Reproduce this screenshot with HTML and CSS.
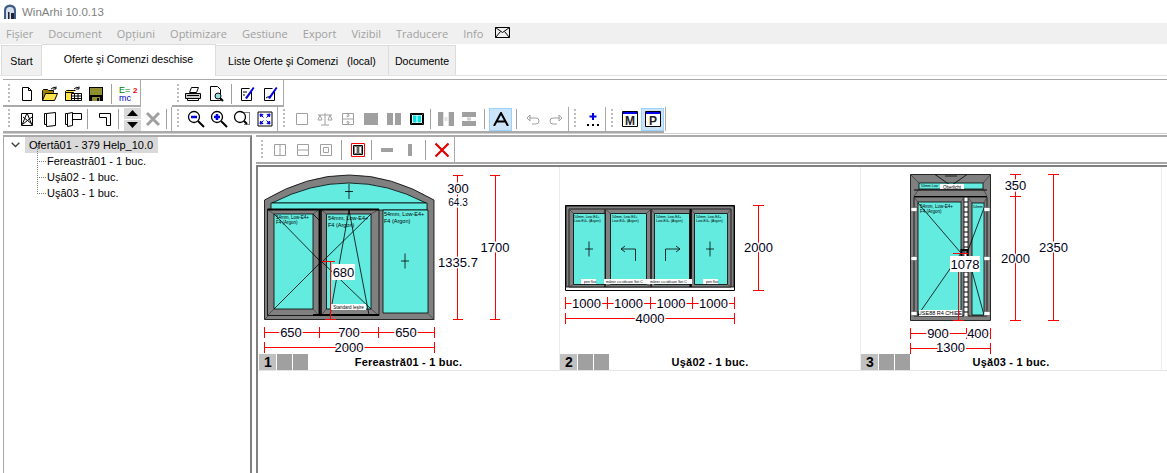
FILE: index.html
```html
<!DOCTYPE html>
<html lang="ro">
<head>
<meta charset="utf-8">
<title>WinArhi 10.0.13</title>
<link rel="stylesheet" href="styles.css">
</head>
<body>
<div class="app">
  <header class="titlebar">
    <svg class="appicon" width="14" height="16" viewBox="0 0 14 16"><path d="M1 15V6a6 5.500 0 0 1 12 0v9z" fill="#3f5f88"/><path d="M3 15V7a4 4 0 0 1 8 0v8z" fill="#d5dee8"/><path d="M5 15V8h1.500v7zM8 9h3v6H8z" fill="#223"/></svg>
    <span class="apptitle">WinArhi 10.0.13</span>
  </header>
  <nav class="menubar">
    <span class="mi m1">Fişier</span><span class="mi">Document</span><span class="mi">Opţiuni</span><span class="mi">Optimizare</span><span class="mi">Gestiune</span><span class="mi">Export</span><span class="mi">Vizibil</span><span class="mi">Traducere</span><span class="mi">Info</span>
    <svg class="mail" width="15" height="11" viewBox="0 0 15 11"><path d="M.5.500h14v10H.5zM.5.500l7 5 7-5M.5 10.500l5-6M14.500 10.500l-5-6" fill="none" stroke="#000"/></svg>
  </nav>
  <div class="tabs">
    <div class="tab t-start">Start</div>
    <div class="tab t-active">Oferte şi Comenzi deschise</div>
    <div class="tab t-list">Liste Oferte şi Comenzi &nbsp; (local)</div>
    <div class="tab t-docs">Documente</div>
  </div>

  <div class="toolbars">
    <div class="tb-row r1">
      <div class="group g-file">
        <i class="grip"></i>
        <span class="btn"><svg width="16" height="16" viewBox="0 0 16 16"><path d="M3.500 1.500h6l3 3v10h-9zM9.500 1.500v3h3" fill="#fff" stroke="#000"/></svg></span>
        <span class="btn"><svg width="18" height="16" viewBox="0 0 18 16"><path d="M1.500 14.500v-10l1-1h4l1 1h5v2" fill="#a08000" stroke="#000"/><path d="M1.500 14.500l3-7h12l-3 7z" fill="#ffe34d" stroke="#000"/><path d="M10 3q3-3 5-1M15 .5v2.500h-3" fill="none" stroke="#000"/></svg></span>
        <span class="btn"><svg width="18" height="16" viewBox="0 0 18 16"><path d="M1.500 14.500v-9l1-1h9" fill="#ffe34d" stroke="#000"/><path d="M1.500 6.500h8v8h-8z" fill="#ffe34d" stroke="#000"/><path d="M7.500 7.500h10v7h-10zM7.500 10h10M7.500 12.500h10M10.500 7.500v7M14 7.500v7" fill="#fff" stroke="#000"/><path d="M10 3q3-3 5-1M15 .5v2.500h-3" fill="none" stroke="#000"/></svg></span>
        <span class="btn"><svg width="16" height="16" viewBox="0 0 16 16"><path d="M1 1h14v14H1z" fill="#000"/><path d="M2 2h12v7H2z" fill="#8f8f2f"/><path d="M4 11h8v4H4z" fill="#8f8f2f"/><path d="M9 12h2v3H9z" fill="#000"/></svg></span>
        <i class="sep"></i>
        <span class="btn"><svg width="20" height="18" viewBox="0 0 20 18"><text x="1" y="8" class="ic-t green">E=</text><text x="1" y="16" class="ic-t blue">mc</text><text x="15" y="8" class="ic-t red">2</text></svg></span>
      </div>
      <div class="group g-print">
        <i class="grip"></i>
        <span class="btn"><svg width="18" height="16" viewBox="0 0 18 16"><path d="M5.500 6.500l2-5h7l-2 5z" fill="#fff" stroke="#000"/><path d="M1.500 7.500h15v5h-15z" fill="#c8c8c8" stroke="#000"/><path d="M3.500 12.500h11v2h-11zM3 9.500h12" fill="#fff" stroke="#000"/></svg></span>
        <span class="btn"><svg width="16" height="16" viewBox="0 0 16 16"><path d="M2.500.5h7l3 3v11h-10z" fill="#fff" stroke="#000"/><circle cx="10" cy="10" r="3" fill="#8ee0e0" stroke="#000"/><path d="M12 12l3 3" stroke="#000" stroke-width="2"/></svg></span>
        <i class="sep"></i>
        <span class="btn"><svg width="16" height="16" viewBox="0 0 16 16"><path d="M11.500 6v8.500h-10v-12h8M3 6h4M3 9h2" fill="#fff" stroke="#000"/><path d="M5 12L13 1l1.500 1L7 13z" fill="#0000e0"/></svg></span>
        <span class="btn"><svg width="16" height="16" viewBox="0 0 16 16"><path d="M11.500 6v8.500h-10v-12h8M3 12q2-2 4-1" fill="#fff" stroke="#000"/><path d="M5 12L13 1l1.500 1L7 13z" fill="#0000e0"/></svg></span>
      </div>
    </div>
    <div class="tb-row r2">
      <div class="group g-a">
        <i class="grip"></i>
        <span class="btn"><svg width="14" height="16" viewBox="0 0 14 16"><path d="M1.500 2.500h11v12h-11zM2 14L7 2l5 12M3 6l9 7M12 6l-9 7" fill="none" stroke="#000"/></svg></span>
        <span class="btn"><svg width="14" height="16" viewBox="0 0 14 16"><path d="M3.500 2.500l9-1v13l-9 1zM3.500 2.500h-2v11h2" fill="#fff" stroke="#000"/></svg></span>
        <span class="btn"><svg width="18" height="16" viewBox="0 0 18 16"><path d="M3.500 2.500l5-1v13l-5 1zM3.500 2.500h-2v11h2M8.500 2.500h9v6h-9" fill="#fff" stroke="#000"/></svg></span>
        <i class="sep sep-a"></i>
        <span class="btn"><svg width="14" height="14" viewBox="0 0 14 14"><path d="M1.500 1.500h11v12h-4v-8h-7z" fill="#fff" stroke="#000"/></svg></span>
        <i class="sep sep-narrow"></i>
        <span class="updown"><b class="ud"><svg width="11" height="6" viewBox="0 0 11 6"><path d="M5.500 0l5.500 6H0z"/></svg></b><b class="ud"><svg width="11" height="6" viewBox="0 0 11 6"><path d="M0 0h11L5.500 6z"/></svg></b></span>
        <span class="btn"><svg width="16" height="16" viewBox="0 0 16 16"><path d="M2 2l12 12M14 2L2 14" stroke="#a0a0a0" stroke-width="3"/></svg></span>
        <i class="sep sep-narrow"></i>
      </div>
      <div class="group g-b">
        <i class="grip"></i>
        <span class="btn"><svg width="18" height="18" viewBox="0 0 18 18"><circle cx="7" cy="7" r="5.500" fill="#fff" stroke="#000" stroke-width="1.300"/><path d="M4 7h6" stroke="#0000e0" stroke-width="2.500"/><path d="M11 11l6 6" stroke="#000" stroke-width="2"/></svg></span>
        <span class="btn"><svg width="18" height="18" viewBox="0 0 18 18"><circle cx="7" cy="7" r="5.500" fill="#fff" stroke="#000" stroke-width="1.300"/><path d="M4 7h6M7 4v6" stroke="#0000e0" stroke-width="2.500"/><path d="M11 11l6 6" stroke="#000" stroke-width="2"/></svg></span>
        <span class="btn"><svg width="18" height="18" viewBox="0 0 18 18"><circle cx="7" cy="7" r="5.500" fill="#fff" stroke="#000" stroke-width="1.300"/><path d="M11 11l3 3" stroke="#000" stroke-width="2"/><path d="M8.500 2.500h8v12h-6" fill="none" stroke="#000" stroke-dasharray="1 1"/></svg></span>
        <span class="btn"><svg width="16" height="16" viewBox="0 0 16 16"><path d="M1 1h14v14H1z" fill="#fff" stroke="#000"/><path d="M3 3l3 .5L3.500 6zM13 3l-3 .5L12.500 6zM3 13l3-.5L3.500 10zM13 13l-3-.5 2.500-2.500zM4 4l2.500 2.500M12 4L9.500 6.500M4 12l2.500-2.500M12 12L9.500 9.500" fill="#0000e0" stroke="#0000e0"/></svg></span>
      </div>
      <div class="group g-c">
        <i class="grip"></i>
        <span class="btn"><svg width="14" height="14" viewBox="0 0 14 14"><path d="M1.500 1.500h11v11h-11z" fill="none" stroke="#a0a0a0"/></svg></span>
        <span class="btn"><svg width="16" height="14" viewBox="0 0 16 14"><path d="M8 1v12M4 13h8M1 3h14M3 3l-2 5h4zM13 3l-2 5h4z" fill="none" stroke="#a0a0a0"/></svg></span>
        <span class="btn"><svg width="14" height="14" viewBox="0 0 14 14"><path d="M1.500 1.500h11v11h-11zM1.500 7h11M7 2v3l-1.500-1M7 2l1.500 2M7 12V9l-1.500 1M7 12l1.500-2" fill="none" stroke="#a0a0a0"/></svg></span>
        <span class="btn"><svg width="14" height="14" viewBox="0 0 14 14"><path d="M0 1h14v12H0z" fill="#a0a0a0"/></svg></span>
        <span class="btn"><svg width="14" height="14" viewBox="0 0 14 14"><path d="M0 1h6v12H0zM8 1h6v12H8z" fill="#a0a0a0"/></svg></span>
        <span class="btn"><svg width="14" height="14" viewBox="0 0 14 14"><path d="M.5 1.500h13v11H.5z" fill="#fff" stroke="#000"/><path d="M1.500 2.500h11v9h-11z" fill="none" stroke="#000"/><path d="M3 3.500h3.500v7H3zM7.500 3.500H11v7H7.500z" fill="#00e0e0"/></svg></span>
        <i class="sep sep-narrow"></i>
        <span class="btn"><svg width="16" height="14" viewBox="0 0 16 14"><path d="M0 0h5v14H0zM11 0h5v14h-5zM6.500 6h3M6.500 8h3" fill="#a0a0a0" stroke="#a0a0a0" stroke-width=".6"/></svg></span>
        <span class="btn"><svg width="16" height="14" viewBox="0 0 16 14"><path d="M1 0h14v5H1zM1 9h14v5H1z" fill="#a0a0a0"/><path d="M7 5.500v3M9 5.500v3" stroke="#a0a0a0"/></svg></span>
        <i class="sep"></i>
        <span class="btn on"><svg width="16" height="14" viewBox="0 0 16 14"><path d="M1 14L8 1l7 13M3.500 9.500h9" fill="none" stroke="#000" stroke-width="2"/></svg></span>
        <i class="sep"></i>
        <span class="btn"><svg width="14" height="12" viewBox="0 0 14 12"><path d="M3 5h7a3 3 0 0 1 0 6H6M4 2L1 5l3 3z" fill="none" stroke="#a0a0a0"/></svg></span>
        <span class="btn"><svg width="14" height="12" viewBox="0 0 14 12"><path d="M11 5H4a3 3 0 0 0 0 6h4M10 2l3 3-3 3z" fill="none" stroke="#a0a0a0"/></svg></span>
      </div>
      <div class="group g-d">
        <i class="grip"></i>
        <span class="btn"><svg width="14" height="14" viewBox="0 0 14 14"><path d="M7 1v7M3.500 4.500h7" stroke="#0000e0" stroke-width="2"/><path d="M1 12h2v2H1zM6 12h2v2H6zM11 12h2v2h-2z"/></svg></span>
      </div>
      <div class="group g-e">
        <i class="grip"></i>
        <span class="btn"><svg width="16" height="16" viewBox="0 0 16 16"><path d="M.5.500h15v15H.5z" fill="#fff" stroke="#000"/><path d="M1 1h14v2H1z" fill="#0000e0"/><text x="8" y="14" class="ic-l">M</text></svg></span>
        <span class="btn on"><svg width="16" height="16" viewBox="0 0 16 16"><path d="M.5.500h15v15H.5z" fill="#fff" stroke="#000"/><path d="M1 1h14v2H1z" fill="#0000e0"/><text x="8" y="14" class="ic-l">P</text></svg></span>
      </div>
    </div>
  </div>

  <main class="workspace">
    <aside class="tree">
      <div class="root">
        <svg class="chev" width="9" height="6" viewBox="0 0 9 6"><path d="M.7.700l3.800 3.800L8.300.700" fill="none" stroke="#404040" stroke-width="1.400"/></svg>
        <span class="root-label">Ofertă01 - 379 Help_10.0</span>
      </div>
      <ul class="children">
        <li>Fereastră01 - 1 buc.</li>
        <li>Uşă02 - 1 buc.</li>
        <li>Uşă03 - 1 buc.</li>
      </ul>
    </aside>
    <section class="view">
      <div class="tb3">
        <div class="group g-f">
          <i class="grip"></i>
          <span class="btn"><svg width="14" height="14" viewBox="0 0 14 14"><path d="M1.500 1.500h11v11h-11zM7 1.500v11" fill="none" stroke="#a0a0a0"/></svg></span>
          <span class="btn"><svg width="14" height="14" viewBox="0 0 14 14"><path d="M1.500 1.500h11v11h-11zM1.500 7h11" fill="none" stroke="#a0a0a0"/></svg></span>
          <span class="btn"><svg width="14" height="14" viewBox="0 0 14 14"><path d="M1.500 1.500h11v11h-11zM4.500 4.500h5v5h-5z" fill="none" stroke="#a0a0a0"/></svg></span>
          <i class="sep"></i>
          <span class="btn"><svg width="14" height="14" viewBox="0 0 14 14"><path d="M.5.500h13v13H.5z" fill="none" stroke="#f00"/><path d="M2.500 2.500h9v9h-9zM7 2.500v9" fill="#fff" stroke="#000"/><path d="M3.500 3.500H6v7H3.500zM8 3.500h2.500v7H8z" fill="#fff" stroke="#000" stroke-width=".5"/></svg></span>
          <i class="sep sep-narrow"></i>
          <span class="btn"><svg width="14" height="4" viewBox="0 0 14 4"><path d="M1 0h12v4H1z" fill="#a0a0a0"/></svg></span>
          <span class="btn"><svg width="4" height="14" viewBox="0 0 4 14"><path d="M0 1h4v12H0z" fill="#a0a0a0"/></svg></span>
          <i class="sep"></i>
          <span class="btn"><svg width="16" height="16" viewBox="0 0 16 16"><path d="M1.500 1.500l13 13M14.500 1.500l-13 13" stroke="#e00000" stroke-width="2.200"/></svg></span>
        </div>
      </div>
      <div class="canvas">
        <figure class="cell">
          <svg class="drawing" width="301" height="187" viewBox="258 167 301 187">
            <path class="fr" d="M264.500 200Q349 150 434 200V319.500H264.500Z"/>
            <path class="gl" d="M272 203Q349 163 426 203Z"/>
            <path class="gl" d="M271 203h156v7H271z"/>
            <path class="fr" d="M267.500 209.500h51.500v106h-51.500zM321 209.500h58v106h-58z"/>
            <path class="gl" d="M274 214h39v95h-39zM326.500 214h44.500v95h-44.500zM383 210h45v103h-45z"/>
            <path class="mt" d="M264.500 319.500l3.500-3.500M434 319.500l-6-6M267.500 209.500l6.500 4.500M319 209.500l-6 4.500M267.500 315.500l6.500-6.500M319 315.500l-6-6.500M321 209.500l5.500 4.500M379 209.500l-8 4.500M321 315.500l5.500-6.500M379 315.500l-8-6.500"/>
            <path class="blk" d="M319.500 209v106M321 209v106"/>
            <path class="blk3" d="M267.500 209.500H379M313 315h66"/>
            <path class="th" d="M345 191.500h8M349 184v15M401 261h8M405 253.500v15M274 214l47 48-47 47M313 214l6 6M371 214l-49 48 49 47M349 210l-19 105M349 210l20 105"/>
            <text x="276" y="219" class="sm">54mm, Low-E4+</text><text x="276" y="224" class="sm">F4 (Argon)</text>
            <text x="328" y="220" class="sm sm2">54mm, Low-E4+</text><text x="328" y="227" class="sm sm2">F4 (Argon)</text>
            <text x="384" y="216" class="sm sm2">54mm, Low-E4+</text><text x="384" y="223" class="sm sm2">F4 (Argon)</text>
            <rect x="331" y="304" width="35" height="6" class="lb"/><text x="348.500" y="309" class="sm mid">Standard Ieşire</text>
            <path class="dim" d="M453 175.500h10M453 319.500h10M457.500 175.500v144M490 175.500h10M490 319.500h10M495.500 175.500v144M264.500 327v11M319.500 327v11M378.500 327v11M434 327v11M264.500 332.500H434M264.500 342v11M434 342v11M264.500 347.500H434M322 261.500h13M330.500 261.500v58M325 319.500h11"/>
            <text x="458" y="193" class="dn halo">300</text><text x="458" y="206" class="dn halo dn-s">64.3</text><text x="458" y="267" class="dn halo">1335.7</text><text x="495" y="252" class="dn halo">1700</text>
            <text x="291" y="337" class="dn halo">650</text><text x="349" y="337" class="dn halo">700</text><text x="406" y="337" class="dn halo">650</text><text x="349" y="352" class="dn halo">2000</text>
            <rect x="332" y="264" width="23" height="16" class="lb"/><text x="343.500" y="277" class="dn">680</text>
          </svg>
          <figcaption class="cap"><span class="chips"><b class="chip num">1</b><b class="chip"></b><b class="chip"></b></span><span class="cap-t">Fereastră01 - 1 buc.</span></figcaption>
        </figure>
        <figure class="cell">
          <svg class="drawing" width="300" height="187" viewBox="560 167 300 187">
            <path class="wh" d="M565.500 205.500h169v85h-169z"/>
            <path class="fr" d="M566 206h168v81H566z"/>
            <path class="fr" d="M569 209h36v78h-36zM605 209h46v78h-46zM651 209h40v78h-40zM691 209h40v78h-40z"/>
            <path class="gl" d="M573.500 213.500h31.500v71h-31.500zM610.500 213.500h36v71h-36zM654.500 213.500h35v71h-35zM694.500 213.500h33v71h-33z"/>
            <path class="mt" d="M569 209l4.500 4.500M605 209l-1 4.500M605 209l5.500 4.500M651 209l-4.500 4.500M651 209l3.500 4.500M691 209l-1.500 4.500M691 209l3.500 4.500M731 209l-3.500 4.500M569 287l4.500-2.500M731 287l-3.500-2.500M605 287l5.500-2.500M651 287l-4.500-2.500"/>
            <path class="blk3" d="M690.500 209v78"/>
            <path class="th" d="M585 249h8M589 241.500v15M706 249h8M710 241.500v15M635.500 261v-12H621M625 246l-4 3 4 3M665.500 261v-12H680M676 246l4 3-4 3"/>
            <g class="tiny"><text x="574" y="218">54mm, Low-E4+</text><text x="574" y="222">Low-E4+ (Argon)</text><text x="612" y="218">54mm, Low-E4+</text><text x="612" y="222">Low-E4+ (Argon)</text><text x="656" y="218">54mm, Low-E4+</text><text x="656" y="222">Low-E4+ (Argon)</text><text x="696" y="218">54mm, Low-E4+</text><text x="696" y="222">Low-E4+ (Argon)</text></g>
            <path class="lb" d="M581 279h15v5h-15zM604 279h45v5h-45zM649 279h43v5h-43zM703 279h15v5h-15z"/>
            <g class="tiny"><text x="584" y="283">pen flux</text><text x="606" y="283">mâner cu ridicare Set C</text><text x="650" y="283">mâner cu ridicare Set C</text><text x="706" y="283">pen flux</text></g>
            <path class="dim" d="M753 205.500h11M753 290.500h11M758.500 205.500v85M565.500 297v12M607.500 297v12M650 297v12M692.500 297v12M734.500 297v12M565.500 303.500h169M565.500 313v11M734.500 313v11M565.500 318.500h169"/>
            <text x="758.500" y="252" class="dn halo">2000</text>
            <text x="586.500" y="308" class="dn halo">1000</text><text x="628.500" y="308" class="dn halo">1000</text><text x="671" y="308" class="dn halo">1000</text><text x="713.500" y="308" class="dn halo">1000</text><text x="650" y="323" class="dn halo">4000</text>
          </svg>
          <figcaption class="cap"><span class="chips"><b class="chip num">2</b><b class="chip"></b><b class="chip"></b></span><span class="cap-t">Uşă02 - 1 buc.</span></figcaption>
        </figure>
        <figure class="cell">
          <svg class="drawing" width="300" height="187" viewBox="861 167 300 187">
            <path class="fr" d="M910.500 174.500h80v146h-80z"/>
            <path class="gl" d="M919 183h64v6h-64z"/>
            <path class="mt" d="M910.500 174.500l8.500 8.500M990.500 174.500l-7.500 8.500M914 196l5-7M987 196l-4-7"/>
            <path class="blk" d="M914 196.500h73M914 190h73"/>
            <path class="th" d="M935 174.500l20 14M967 174.500l-20 14M945 176h12"/>
            <path class="fr" d="M914 197h50v119h-50zM968 197h19v119h-19z"/>
            <path class="gl" d="M918 202h43v113h-43zM972 203h12v112h-12z"/>
            <path class="mt" d="M914 197l4 5M964 197l-3 5M968 197l4 6M987 197l-3 6M914 316l4-1M987 316l-3-1"/>
            <path class="wht" d="M966 198v118"/>
            <path class="blk3" d="M961.500 250h6v8h-6z"/>
            <path class="th" d="M918 203l43 50-43 62M984 208l-17 45 17 62"/>
            <path class="hg" d="M911 207.500h6v4h-6zM911 256.500h6v4h-6zM911 311.500h6v4h-6zM984 207.500h6v4h-6zM984 256.500h6v4h-6zM984 311.500h6v4h-6z"/>
            <text x="920" y="208" class="sm">54mm, Low-E4+</text><text x="920" y="213" class="sm">F4 (Argon)</text>
            <text x="973" y="208" class="tinyt">54mm</text>
            <rect x="940" y="184" width="24" height="5" class="lb"/><text x="952" y="188.500" class="sm mid">Oberlicht</text>
            <text x="921" y="186.500" class="tinyt">50mm Low</text>
            <rect x="919" y="310" width="43" height="6" class="lb"/><text x="940" y="315" class="sm mid sm2">USE88 R4 CHIEE</text>
            <path class="dim" d="M953 253.500h15M958.500 272v48M953 320.500h11M1010 174.500h11M1010 196.500h11M1010 320.500h11M1015.500 174.500v146M1048 174.500h11M1048 320.500h11M1053.500 174.500v146M910.500 328v11M966.500 328v11M990.500 328v11M910.500 333.500h80M910.500 343v11M990.500 343v11M910.500 348.500h80"/>
            <rect x="950" y="256" width="30" height="16" class="lb"/><text x="965" y="269" class="dn">1078</text>
            <text x="1015.500" y="190" class="dn halo">350</text><text x="1015.500" y="263" class="dn halo">2000</text><text x="1053.500" y="252" class="dn halo">2350</text>
            <text x="938" y="338" class="dn halo">900</text><text x="978" y="338" class="dn halo">400</text><text x="950.500" y="352" class="dn halo">1300</text>
          </svg>
          <figcaption class="cap"><span class="chips"><b class="chip num">3</b><b class="chip"></b><b class="chip"></b></span><span class="cap-t">Uşă03 - 1 buc.</span></figcaption>
        </figure>
        <div class="cell cell-empty"></div>
      </div>
    </section>
  </main>
</div>
</body>
</html>
```
FILE: styles.css
```css
* { box-sizing: border-box; }
html, body { margin: 0; height: 100%; background: #fff; }
body { font-family: "Liberation Sans", sans-serif; font-size: 12px; color: #000; overflow: hidden; }
.app { width: 1167px; height: 473px; display: flex; flex-direction: column; overflow: hidden; }

.titlebar { height: 23px; display: flex; align-items: center; padding: 1px 0 0 3px; gap: 5px; }
.apptitle { color: #808080; font-size: 11.500px; }

.menubar { height: 21px; background: #f0f0f0; display: flex; align-items: center; padding-left: 6px; color: #a0a0a0; gap: 15px; font-family: "Open Sans", sans-serif; font-size: 11px; }
.mail { margin-left: -3px; margin-bottom: 3px; }

.tabs { height: 32px; display: flex; align-items: flex-end; padding-left: 1px; border-bottom: 1px solid #e3e3e3; }
.tab { height: 30px; background: #f0f0f0; border: 1px solid #dcdcdc; border-bottom: 0; border-left: 0; display: flex; align-items: center; justify-content: center; font-size: 10.600px; }
.t-start { width: 41px; border-left: 1px solid #dcdcdc; }
.t-active { width: 174px; height: 32px; background: #fff; padding-bottom: 4px; margin-bottom: -1px; border-top-color: #dcdcdc; }
.t-list { width: 173px; }
.t-docs { width: 67px; }

.toolbars { margin: 3px 0 0 3px; border-top: 1px solid #a9a9a9; border-bottom: 1px solid #d0d0d0; }
.tb-row { display: flex; }
.r1 { height: 27px; }
.r2 { height: 26px; border-bottom: 2px solid #a9a9a9; width: 661px; }
.group { display: flex; align-items: center; padding-left: 5px; border-right: 1px solid #a9a9a9; border-bottom: 2px solid #a9a9a9; height: 100%; padding-right: 1px; }
.r1 .group { padding-top: 2px; }
.r2 .group { border-bottom: 0; }
.r2 .group:first-child { width: 170px; }
.g-print { margin-left: 31px; }
.g-print .grip { margin-right: 2px; }
.grip { width: 2px; height: 20px; margin-right: 5px; background: repeating-linear-gradient(#bdbdbd 0 2px, transparent 2px 4px); }
.btn { width: 23px; height: 23px; display: flex; align-items: center; justify-content: center; flex: none; }
.on { background: #cce4f7; border: 1px solid #99d1ff; }
.sep { width: 1px; height: 20px; background: #a0a0a0; margin: 0 4px; flex: none; }
.sep-narrow { margin: 0 3px 0 2px; }
.sep-a { margin: 0 5px 0 3px; }
.updown { width: 17px; margin-left: 2px; display: flex; flex-direction: column; gap: 1px; flex: none; }
.ud { height: 11px; background: #d9d9d9; display: flex; align-items: center; justify-content: center; }
.ic-t { font: 9px "Liberation Sans", sans-serif; }
.green { fill: #008000; }
.blue { fill: #0000c0; }
.red { fill: #e00000; font-weight: bold; font-size: 8px; }
.ic-l { font: bold 12px "Liberation Sans", sans-serif; text-anchor: middle; fill: #222; }

.workspace { flex: 1; display: flex; min-height: 0; margin-top: 1px; }
.tree { width: 249px; margin-left: 3px; border-top: 2px solid #a9a9a9; border-left: 1px solid #a9a9a9; border-right: 2px solid #808080; flex: none; }
.root { display: flex; align-items: center; height: 16px; padding-left: 7px; }
.chev { margin-right: 5px; }
.root-label { background: #d9d9d9; padding: 0 5px 0 4px; height: 16px; line-height: 16px; font-size: 11px; }
.children { list-style: none; margin: 0; padding: 0; font-size: 11px; }
.children li { position: relative; height: 16px; line-height: 16px; padding-left: 43px; }
.children li::before { content: ""; position: absolute; left: 33px; top: -8px; height: 16px; width: 8px; border-left: 1px dotted #808080; border-bottom: 1px dotted #808080; }

.view { flex: 1; margin-left: 4px; display: flex; flex-direction: column; min-width: 0; }
.tb3 { height: 29px; border-top: 2px solid #a9a9a9; border-bottom: 2px solid #a9a9a9; display: flex; }
.g-f { border-bottom: 0; }
.canvas { flex: 1; margin-top: 1px; border-left: 2px solid #808080; border-top: 2px solid #808080; display: grid; grid-template-columns: 302px 301px 301px 1fr; align-content: start; }
.cell { margin: 0; border-right: 1px solid #ececec; border-bottom: 1px solid #e4e4e4; }
.cell-empty { border-right: 0; }
.cell:first-child .chips { margin-left: 1px; }
.drawing { display: block; }
.cap { height: 16px; display: grid; grid-template-columns: 1fr auto 1fr; align-items: start; }
.chips { display: flex; gap: 1px; }
.chip { width: 15px; height: 16px; background: #a0a0a0; }
.num { width: 17px; background: #c0c0c0; font: bold 14px/16px "Liberation Sans", sans-serif; padding-left: 5px; }
.cap-t { font: bold 11px/16px "Liberation Sans", sans-serif; letter-spacing: .2px; }

.fr { fill: #808080; stroke: #000; stroke-width: .8; }
.gl { fill: #64ebdf; stroke: #000; stroke-width: .8; }
.mt { stroke: #404040; stroke-width: .8; fill: none; }
.blk { stroke: #000; stroke-width: 1.200; fill: none; }
.blk3 { stroke: #000; stroke-width: 2; fill: none; }
.th { stroke: #000; stroke-width: .8; fill: none; }
.wh { fill: #fff; stroke: #000; }
.wht { stroke: #fff; stroke-width: 3; stroke-dasharray: 3 2; fill: none; }
.hg { fill: #fff; stroke: #404040; stroke-width: .5; }
.lb { fill: #fff; }
.dim { stroke: #f00; stroke-width: 1; fill: none; shape-rendering: crispEdges; }
.dn { font: 13px "Liberation Sans", sans-serif; text-anchor: middle; fill: #000018; }
.dn-s { font-size: 10px; }
.halo { paint-order: stroke; stroke: #fff; stroke-width: 3px; }
.sm { font: 4.500px "Liberation Sans", sans-serif; fill: #000; }
.sm2 { font-size: 5.500px; }
.mid { text-anchor: middle; }
.tiny text, .tinyt { font: 3.500px "Liberation Sans", sans-serif; fill: #000; }
```
